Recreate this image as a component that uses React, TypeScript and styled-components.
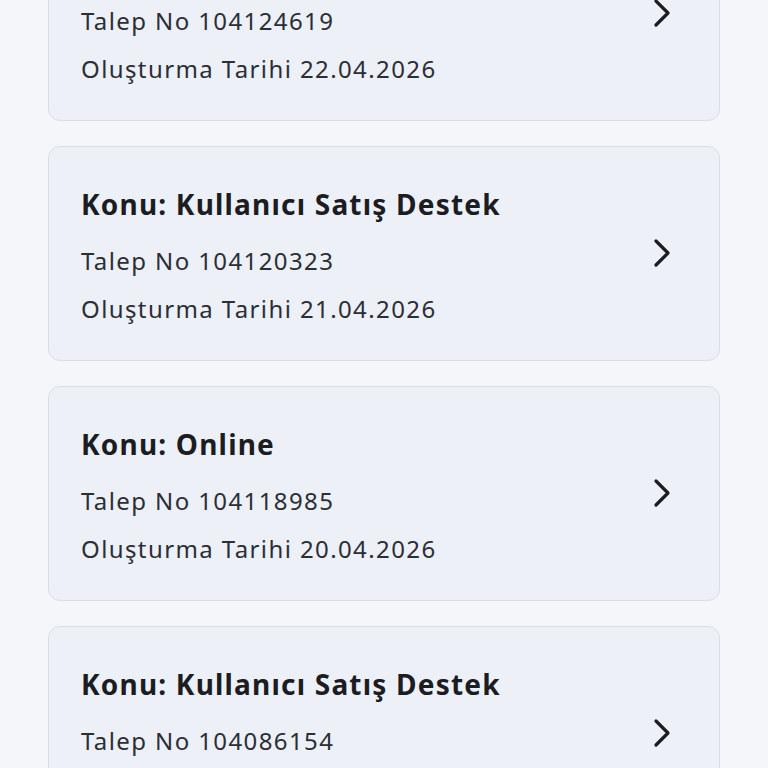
import React from "react";
import styled, { createGlobalStyle } from "styled-components";

const Global = createGlobalStyle`
  html, body { margin: 0; padding: 0; background: #f5f6fa; }
  body { font-family: "Noto Sans", "Open Sans", sans-serif; overflow: hidden; }
`;

const Page = styled.div`
  width: 768px;
  height: 768px;
  overflow: hidden;
  background: #f5f6fa;
`;

const List = styled.div`
  display: flex;
  flex-direction: column;
  gap: 25px;
  padding: 0 48px;
  margin-top: -94px;
`;

const Card = styled.div`
  display: flex;
  align-items: center;
  justify-content: space-between;
  height: 215px;
  box-sizing: border-box;
  padding: 39px 46px 27px 32px;
  background: #edf0f7;
  border: 1px solid #dadde5;
  border-radius: 12px;
`;

const Info = styled.div`
  display: flex;
  flex-direction: column;
`;

const Title = styled.div`
  font-size: 28px;
  line-height: 36px;
  font-weight: 700;
  letter-spacing: 1.2px;
  color: #1b1d23;
  margin-bottom: 15px;
  white-space: nowrap;
`;

const Line = styled.div`
  font-size: 24px;
  line-height: 48px;
  letter-spacing: 1.4px;
  color: #2b2e36;
  white-space: nowrap;
`;

const ChevronBox = styled.div`
  display: flex;
  margin-top: -13px;
`;

const Chevron = () => (
  <ChevronBox>
    <svg width="22" height="30" viewBox="0 0 22 30" fill="none">
      <path d="M5 3 L17 15 L5 27" stroke="#1b1d23" strokeWidth="3.2" strokeLinecap="round" strokeLinejoin="round" />
    </svg>
  </ChevronBox>
);

const items = [
  { topic: "Kullanıcı Satış Destek", no: "104124619", date: "22.04.2026" },
  { topic: "Kullanıcı Satış Destek", no: "104120323", date: "21.04.2026" },
  { topic: "Online", no: "104118985", date: "20.04.2026" },
  { topic: "Kullanıcı Satış Destek", no: "104086154", date: "19.04.2026" },
];

export default function App() {
  return (
    <Page>
      <Global />
      <List>
        {items.map((it) => (
          <Card key={it.no}>
            <Info>
              <Title>Konu: {it.topic}</Title>
              <Line>Talep No {it.no}</Line>
              <Line>Oluşturma Tarihi {it.date}</Line>
            </Info>
            <Chevron />
          </Card>
        ))}
      </List>
    </Page>
  );
}
